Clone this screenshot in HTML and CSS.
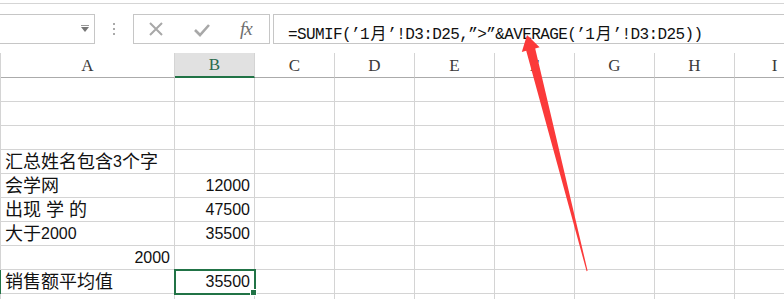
FILE: index.html
```html
<!DOCTYPE html>
<html>
<head>
    <title>SUMIF</title>
    <link rel="stylesheet" href="styles.css">
</head>
<body>
    <div class="ribbon-edge"></div>
    <div class="toolbar">
        <div class="namebox"><span class="caret"></span></div>
        <div class="grip"><i></i><i></i><i></i></div>
        <div class="fxbox">
            <svg class="ico" width="16" height="16" viewBox="0 0 16 16"><path d="M2 2 L14 14 M14 2 L2 14" stroke="#a8a8a8" stroke-width="2" fill="none"/></svg>
            <svg class="ico" width="16" height="16" viewBox="0 0 16 16"><path d="M1 8 L6 13 L15 3" stroke="#a8a8a8" stroke-width="2.6" fill="none"/></svg>
            <span class="fx">fx</span>
        </div>
        <div class="formula">=SUMIF(’1<span class="fw">月</span>’!D3:D25,”&gt;”&amp;AVERAGE(’1<span class="fw">月</span>’!D3:D25))</div>
    </div>

    <div class="sheet">
        <div class="row head">
            <div class="cell">A</div>
            <div class="cell sel-col">B</div>
            <div class="cell">C</div>
            <div class="cell">D</div>
            <div class="cell">E</div>
            <div class="cell">F</div>
            <div class="cell">G</div>
            <div class="cell">H</div>
            <div class="cell">I</div>
        </div>
        <div class="row"><div class="cell"></div><div class="cell"></div><div class="cell"></div><div class="cell"></div><div class="cell"></div><div class="cell"></div><div class="cell"></div><div class="cell"></div><div class="cell"></div></div>
        <div class="row"><div class="cell"></div><div class="cell"></div><div class="cell"></div><div class="cell"></div><div class="cell"></div><div class="cell"></div><div class="cell"></div><div class="cell"></div><div class="cell"></div></div>
        <div class="row"><div class="cell"></div><div class="cell"></div><div class="cell"></div><div class="cell"></div><div class="cell"></div><div class="cell"></div><div class="cell"></div><div class="cell"></div><div class="cell"></div></div>
        <div class="row">
            <div class="cell"><span class="zh">汇总姓名包含</span>3<span class="zh">个字</span></div>
            <div class="cell"></div><div class="cell"></div><div class="cell"></div><div class="cell"></div><div class="cell"></div><div class="cell"></div><div class="cell"></div><div class="cell"></div>
        </div>
        <div class="row">
            <div class="cell"><span class="zh">会学网</span></div>
            <div class="cell num">12000</div>
            <div class="cell"></div><div class="cell"></div><div class="cell"></div><div class="cell"></div><div class="cell"></div><div class="cell"></div><div class="cell"></div>
        </div>
        <div class="row">
            <div class="cell"><span class="zh">出现 学 的</span></div>
            <div class="cell num">47500</div>
            <div class="cell"></div><div class="cell"></div><div class="cell"></div><div class="cell"></div><div class="cell"></div><div class="cell"></div><div class="cell"></div>
        </div>
        <div class="row">
            <div class="cell"><span class="zh">大于</span>2000</div>
            <div class="cell num">35500</div>
            <div class="cell"></div><div class="cell"></div><div class="cell"></div><div class="cell"></div><div class="cell"></div><div class="cell"></div><div class="cell"></div>
        </div>
        <div class="row">
            <div class="cell num">2000</div>
            <div class="cell"></div><div class="cell"></div><div class="cell"></div><div class="cell"></div><div class="cell"></div><div class="cell"></div><div class="cell"></div><div class="cell"></div>
        </div>
        <div class="row active">
            <div class="cell"><span class="zh">销售额平均值</span></div>
            <div class="cell num selected">35500</div>
            <div class="cell"></div><div class="cell"></div><div class="cell"></div><div class="cell"></div><div class="cell"></div><div class="cell"></div><div class="cell"></div>
        </div>
        <div class="row"><div class="cell"></div><div class="cell"></div><div class="cell"></div><div class="cell"></div><div class="cell"></div><div class="cell"></div><div class="cell"></div><div class="cell"></div><div class="cell"></div></div>
    </div>

    <svg class="arrow" width="784" height="299" viewBox="0 0 784 299">
        <polygon points="527,35 539.6,47.2 535.2,48.6 587.6,270.8 586.6,271.2 526.2,50.8 521.8,52" fill="#fb3a3a"/>
    </svg>
</body>
</html>
```

FILE: styles.css
```css
html, body {
    height: 299px;
}
body {
    margin: 0;
    background: #fff;
    font-family: "Liberation Sans", "Noto Sans CJK SC", sans-serif;
    overflow: hidden;
    position: relative;
}
.ribbon-edge {
    height: 3px;
    border-bottom: 1px solid #d5d5d5;
}
.toolbar {
    display: flex;
    height: 30px;
    margin-top: 10px;
}
.namebox {
    width: 95px;
    box-sizing: border-box;
    border: 1px solid #c6c6c6;
    border-left: none;
    position: relative;
}
.caret {
    position: absolute;
    left: 81px;
    top: 12px;
    border-left: 4px solid transparent;
    border-right: 4px solid transparent;
    border-top: 5px solid #777;
}
.caret::before {
    content: "";
    position: absolute;
    left: -4px;
    top: -7px;
    width: 8px;
    height: 1px;
    background: #999;
}
.grip {
    width: 38px;
    display: flex;
    flex-direction: column;
    align-items: center;
    justify-content: center;
    gap: 3px;
}
.grip i {
    width: 2px;
    height: 2px;
    background: #aaa;
}
.fxbox {
    width: 137px;
    box-sizing: border-box;
    border: 1px solid #c6c6c6;
    display: flex;
    align-items: center;
    padding-left: 14px;
}
.fxbox .ico:nth-child(2) {
    margin-left: 30px;
    margin-top: 2px;
}
.fx {
    margin-left: 30px;
    font-family: "Liberation Serif", serif;
    font-style: italic;
    font-size: 19px;
    color: #6e6e6e;
    letter-spacing: -1px;
}
.formula {
    flex: 1;
    margin-left: 3px;
    margin-right: -2px;
    box-sizing: border-box;
    border: 1px solid #c6c6c6;
    padding: 5px 0 0 14px;
    font-family: "Liberation Mono", "Noto Sans CJK SC", monospace;
    font-size: 16px;
    letter-spacing: -0.6px;
    color: #111;
    white-space: nowrap;
}
.fw {
    margin: 0 1.4px;
}
.sheet {
    margin-top: 9px;
    border-left: 1px solid #d4d4d4;
}
.row {
    display: grid;
    grid-template-columns: 174px 80px 80px 80px 80px 80px 80px 80px 80px;
    height: 24px;
}
.cell {
    box-sizing: border-box;
    border-right: 1px solid #d4d4d4;
    border-bottom: 1px solid #d4d4d4;
    display: flex;
    align-items: flex-end;
    padding: 0 4px 1px 4px;
    font-size: 16px;
    line-height: 20px;
    color: #111;
    white-space: nowrap;
}
.zh {
    font-size: 18px;
}
.num {
    justify-content: flex-end;
}
.head {
    height: 25px;
}
.head .cell {
    border-bottom-color: #ababab;
    justify-content: center;
    align-items: center;
    padding: 1px 0 0 0;
    font-family: "Liberation Serif", serif;
    font-size: 17px;
    color: #3a3a3a;
}
.head .sel-col {
    background: #e1e1e1;
    color: #2a6a4c;
    border-bottom: 2px solid #217346;
}
.active {
    box-shadow: -1px 0 0 #217346;
}
.selected {
    position: relative;
    outline: 2px solid #217346;
    outline-offset: -1px;
}
.selected::after {
    content: "";
    position: absolute;
    right: -3px;
    bottom: -3px;
    width: 5px;
    height: 5px;
    background: #217346;
    border: 1px solid #fff;
}
.arrow {
    position: absolute;
    left: 0;
    top: 0;
    pointer-events: none;
}
```
